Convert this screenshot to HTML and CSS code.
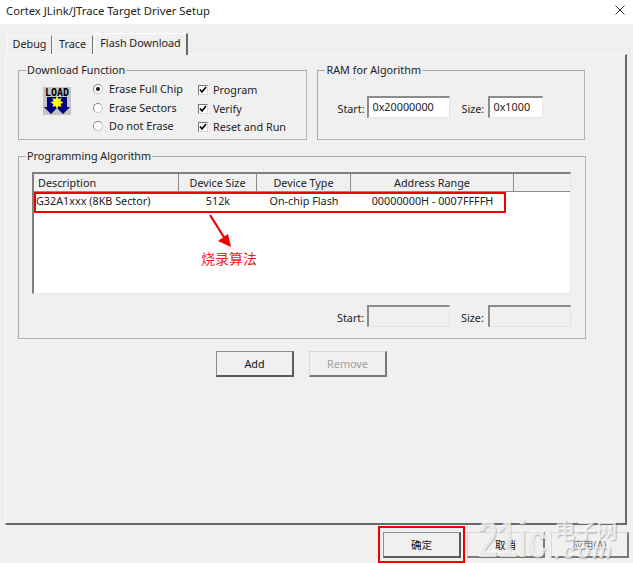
FILE: index.html
```html
<!DOCTYPE html>
<html lang="en">
<head>
  <meta charset="UTF-8" />
  <meta name="viewport" content="width=device-width, initial-scale=1.0" />
  <title>Cortex JLink/JTrace Target Driver Setup</title>
  <link rel="stylesheet" href="styles.css">
</head>
<body>
  <div class="titlebar">
    <span>Cortex JLink/JTrace Target Driver Setup</span>
    <svg class="close" width="10" height="10" viewBox="0 0 10 10"><path d="M0.5 0.5L9.5 9.5M9.5 0.5L0.5 9.5" stroke="#333" fill="none" /></svg>
  </div>

  <div class="tabs">
    <div class="tab tab-debug">Debug</div>
    <div class="tab tab-trace">Trace</div>
    <div class="tab tab-active">Flash Download</div>
  </div>

  <div class="panel">
    <div class="top-row">
      <fieldset class="group group-download">
        <legend>Download Function</legend>
        <div class="download-body">
          <svg class="load-icon" width="28" height="28" viewBox="0 0 28 28">
            <rect width="28" height="28" fill="#c4c4c4" />
            <text x="14" y="9" text-anchor="middle" class="load-text">LOAD</text>
            <polygon points="4,10 24,10 24,20 27,20 20,27 14,21 8,27 1,20 4,20" fill="#00007f" />
            <polygon points="14,9 15.5,12 18.5,11 17.5,14 20.5,15.5 17.5,17 18.5,20 15.5,19 14,22 12.5,19 9.5,20 10.5,17 7.5,15.5 10.5,14 9.5,11 12.5,12" fill="#ffff00" />
          </svg>
          <div class="options options-radio">
            <div class="option"><span class="radio radio-on"></span>Erase Full Chip</div>
            <div class="option"><span class="radio"></span>Erase Sectors</div>
            <div class="option"><span class="radio"></span>Do not Erase</div>
          </div>
          <div class="options options-check">
            <div class="option"><span class="check"><svg width="8" height="8" viewBox="0 0 8 8"><path d="M1 3.5L3 6L7 1" stroke="#000" stroke-width="1.6" fill="none" /></svg></span>Program</div>
            <div class="option"><span class="check"><svg width="8" height="8" viewBox="0 0 8 8"><path d="M1 3.5L3 6L7 1" stroke="#000" stroke-width="1.6" fill="none" /></svg></span>Verify</div>
            <div class="option"><span class="check"><svg width="8" height="8" viewBox="0 0 8 8"><path d="M1 3.5L3 6L7 1" stroke="#000" stroke-width="1.6" fill="none" /></svg></span>Reset and Run</div>
          </div>
        </div>
      </fieldset>

      <fieldset class="group group-ram">
        <legend>RAM for Algorithm</legend>
        <div class="field-row">
          <label>Start:</label>
          <div class="field field-start">0x20000000</div>
          <label class="label-size">Size:</label>
          <div class="field field-small">0x1000</div>
        </div>
      </fieldset>
    </div>

    <fieldset class="group group-algo">
      <legend>Programming Algorithm</legend>
      <div class="algo-body">
        <div class="list">
          <div class="list-head">
            <div class="col col-desc col-left">Description</div>
            <div class="col col-size">Device Size</div>
            <div class="col col-type">Device Type</div>
            <div class="col col-addr">Address Range</div>
            <div class="col col-rest"></div>
          </div>
          <div class="list-row">
            <div class="col-desc col-left">G32A1xxx (8KB Sector)</div>
            <div class="col-size">512k</div>
            <div class="col-type">On-chip Flash</div>
            <div class="col-addr">00000000H - 0007FFFFH</div>
          </div>
          <div class="red-box red-row"></div>
          <svg class="note-arrow" width="30" height="40" viewBox="0 0 30 40">
            <path d="M1 0L18 27" stroke="#f00000" stroke-width="2.2" fill="none" />
            <polygon points="22,32 9,26 19,19" fill="#f00000" />
          </svg>
          <div class="note">烧录算法</div>
        </div>
        <div class="field-row field-row-algo">
          <label>Start:</label>
          <div class="field field-start field-off"></div>
          <label class="label-size">Size:</label>
          <div class="field field-start field-off"></div>
        </div>
      </div>
    </fieldset>

    <div class="algo-buttons">
      <button class="btn btn-default">Add</button>
      <button class="btn btn-off">Remove</button>
    </div>
  </div>

  <div class="footer">
    <button class="btn btn-default btn-cjk">确定</button>
    <button class="btn btn-cjk">取消</button>
    <button class="btn btn-cjk btn-apply">应用(A)</button>
    <div class="red-box red-ok"></div>
    <div class="watermark">
      <span class="wm-big">21ic</span>
      <span class="wm-side"><span class="wm-cn">电子网</span><span class="wm-com">.com</span></span>
    </div>
  </div>
</body>
</html>
```

FILE: styles.css
```css
body {
  font-family: "Noto Sans", "Noto Sans CJK SC", sans-serif;
  font-size: 10.8px;
  color: #222;
  margin: 0;
  width: 633px;
  height: 563px;
  overflow: hidden;
  background: #f0f0f0;
}
.titlebar {
  height: 24px;
  background: #fff;
  padding-left: 6px;
  line-height: 22px;
  position: relative;
  font-size: 11.3px;
}
.close {
  position: absolute;
  right: 8px;
  top: 5px;
}

/* tabs */
.tabs {
  height: 30px;
  padding-left: 7px;
  display: flex;
  align-items: flex-end;
}
.tab {
  box-sizing: border-box;
  height: 19px;
  line-height: 16px;
  text-align: center;
  background: #f0f0f0;
  border-top: 1px solid #fafafa;
  border-left: 1px solid #fafafa;
  border-right: 1px solid #777;
}
.tab-debug { width: 45px; }
.tab-trace { width: 41px; }
.tab-active {
  width: 94px;
  height: 22px;
  line-height: 17px;
  margin-left: 1px;
  margin-bottom: -1px;
  position: relative;
  z-index: 1;
  border-top: 1px solid #fff;
  border-left: 1px solid #fff;
  border-right: 2px solid #696969;
}

.panel {
  box-sizing: border-box;
  margin-left: 5px;
  width: 622px;
  height: 471px;
  padding: 8px 40px 0 12px;
  border-top: 1px solid #fafafa;
  border-left: 1px solid #fafafa;
  border-right: 2px solid #696969;
  border-bottom: 2px solid #696969;
}
.top-row {
  display: flex;
  gap: 10px;
}

/* group boxes */
.group {
  box-sizing: border-box;
  margin: 0;
  padding: 0;
  border: 1px solid #a8a8a8;
  border-right-color: #b4b4b4;
  border-bottom-color: #b4b4b4;
  min-width: 0;
}
.group legend {
  margin-left: 7px;
  padding: 0 1px;
  line-height: 14px;
}
.group-download {
  width: 290px;
  height: 77px;
}
.group-ram {
  width: 268px;
  height: 77px;
}
.group-algo {
  width: 568px;
  height: 190px;
  margin-top: 9px;
}
.download-body {
  display: flex;
  padding-left: 24px;
}
.algo-body {
  padding: 9px 14px 0 13px;
}

.load-icon {
  margin-top: 10px;
  flex: none;
}
.load-text {
  font-family: "DejaVu Sans Mono", monospace;
  font-size: 10px;
  font-weight: bold;
  fill: #000;
}

.options {
  padding-top: 3px;
}
.options-radio {
  margin-left: 22px;
  width: 105px;
}
.options-check {
  padding-top: 4px;
}
.option {
  height: 18.5px;
  line-height: 18px;
  display: flex;
  align-items: center;
}
.radio {
  box-sizing: border-box;
  width: 10px;
  height: 10px;
  margin-right: 6px;
  border-radius: 50%;
  background: #fff;
  border: 1px solid #c4c4c4;
  border-top-color: #8a8a8a;
  border-left-color: #8a8a8a;
  display: flex;
  align-items: center;
  justify-content: center;
}
.radio-on::after {
  content: "";
  width: 4px;
  height: 4px;
  border-radius: 50%;
  background: #111;
}
.check {
  box-sizing: border-box;
  width: 10px;
  height: 10px;
  margin-right: 5px;
  background: #fff;
  border: 1px solid #d8d8d8;
  border-top-color: #777;
  border-left-color: #777;
  display: flex;
}

/* address fields */
.field-row {
  display: flex;
  align-items: center;
  padding: 19px 0 0 19px;
}
.field-row label {
  width: 30px;
  margin-top: 2px;
  white-space: nowrap;
}
.field-row .label-size {
  width: 27px;
  margin-left: 11px;
}
.field {
  box-sizing: border-box;
  height: 22px;
  line-height: 17px;
  padding-left: 3px;
  background: #fff;
  border: 1px solid #e4e4e4;
  border-top: 2px solid #8c8c8c;
  border-left: 2px solid #8c8c8c;
}
.field-start { width: 83px; }
.field-small { width: 55px; }
.field-off { background: #f0f0f0; }
.field-row-algo {
  padding: 11px 0 0 305px;
}

/* list */
.list {
  box-sizing: border-box;
  position: relative;
  width: 539px;
  height: 122px;
  background: #fff;
  border-top: 2px solid #808080;
  border-left: 2px solid #808080;
  border-right: 1px solid #e8e8e8;
  border-bottom: 1px solid #e8e8e8;
}
.list-head {
  display: flex;
  height: 17px;
  background: #f0f0f0;
  border-bottom: 1px solid #8c8c8c;
}
.col {
  box-sizing: border-box;
  line-height: 17px;
  text-align: center;
  border-right: 1px solid #8c8c8c;
}
.col-left { text-align: left; padding-left: 4px; }
.col-desc { width: 145px; }
.col-size { width: 78px; text-align: center; }
.col-type { width: 94px; text-align: center; }
.col-addr { width: 163px; text-align: center; }
.col-rest { flex: 1; border-right: 0; }
.list-row {
  display: flex;
  height: 18px;
  line-height: 18px;
}
.list-row .col-left { width: 143px; padding-left: 2px; }

.red-box {
  position: absolute;
  box-sizing: border-box;
  border: 2px solid #f00000;
  pointer-events: none;
}
.red-row {
  left: 0;
  top: 18px;
  width: 472px;
  height: 21px;
}
.note-arrow {
  position: absolute;
  left: 175px;
  top: 41px;
}
.note {
  position: absolute;
  left: 167px;
  top: 75px;
  font-size: 14px;
  line-height: 20px;
  color: #f02020;
}

/* buttons */
.btn {
  box-sizing: border-box;
  width: 78px;
  height: 26px;
  padding: 0;
  font: inherit;
  color: #111;
  background: #f0f0f0;
  border: 1px solid #d8d8d8;
  border-right: 2px solid #7a7a7a;
  border-bottom: 2px solid #7a7a7a;
}
.btn-default {
  border-top: 1px solid #8a8a8a;
  border-left: 1px solid #8a8a8a;
  border-right: 2px solid #5a5a5a;
  border-bottom: 2px solid #5a5a5a;
}
.btn-off {
  color: #a0a0a0;
}
.algo-buttons {
  display: flex;
  gap: 15px;
  padding: 12px 0 0 198px;
}

.footer {
  position: relative;
  display: flex;
  gap: 6px;
  padding: 7px 0 0 383px;
}
.btn-cjk { font-size: 10.5px; }
.btn-apply { color: #777; }
.red-ok {
  left: 378px;
  top: 1px;
  width: 87px;
  height: 37px;
}

/* watermark over the dialog corner */
.watermark {
  position: absolute;
  left: 478px;
  top: -9px;
  display: flex;
  color: rgba(255, 255, 255, 0.72);
  font-family: "Liberation Sans", sans-serif;
  font-weight: bold;
  text-shadow: 1px 1px 1px rgba(110, 110, 110, 0.45);
}
.wm-big {
  font-size: 52px;
  line-height: 46px;
  margin-right: -25px;
  transform: scaleX(0.68);
  transform-origin: left center;
}
.wm-side {
  display: flex;
  flex-direction: column;
}
.wm-cn {
  font-family: "Noto Sans CJK SC", sans-serif;
  font-size: 21px;
  line-height: 26px;
}
.wm-com {
  font-size: 22px;
  font-style: italic;
  line-height: 18px;
  letter-spacing: 2px;
}
```
